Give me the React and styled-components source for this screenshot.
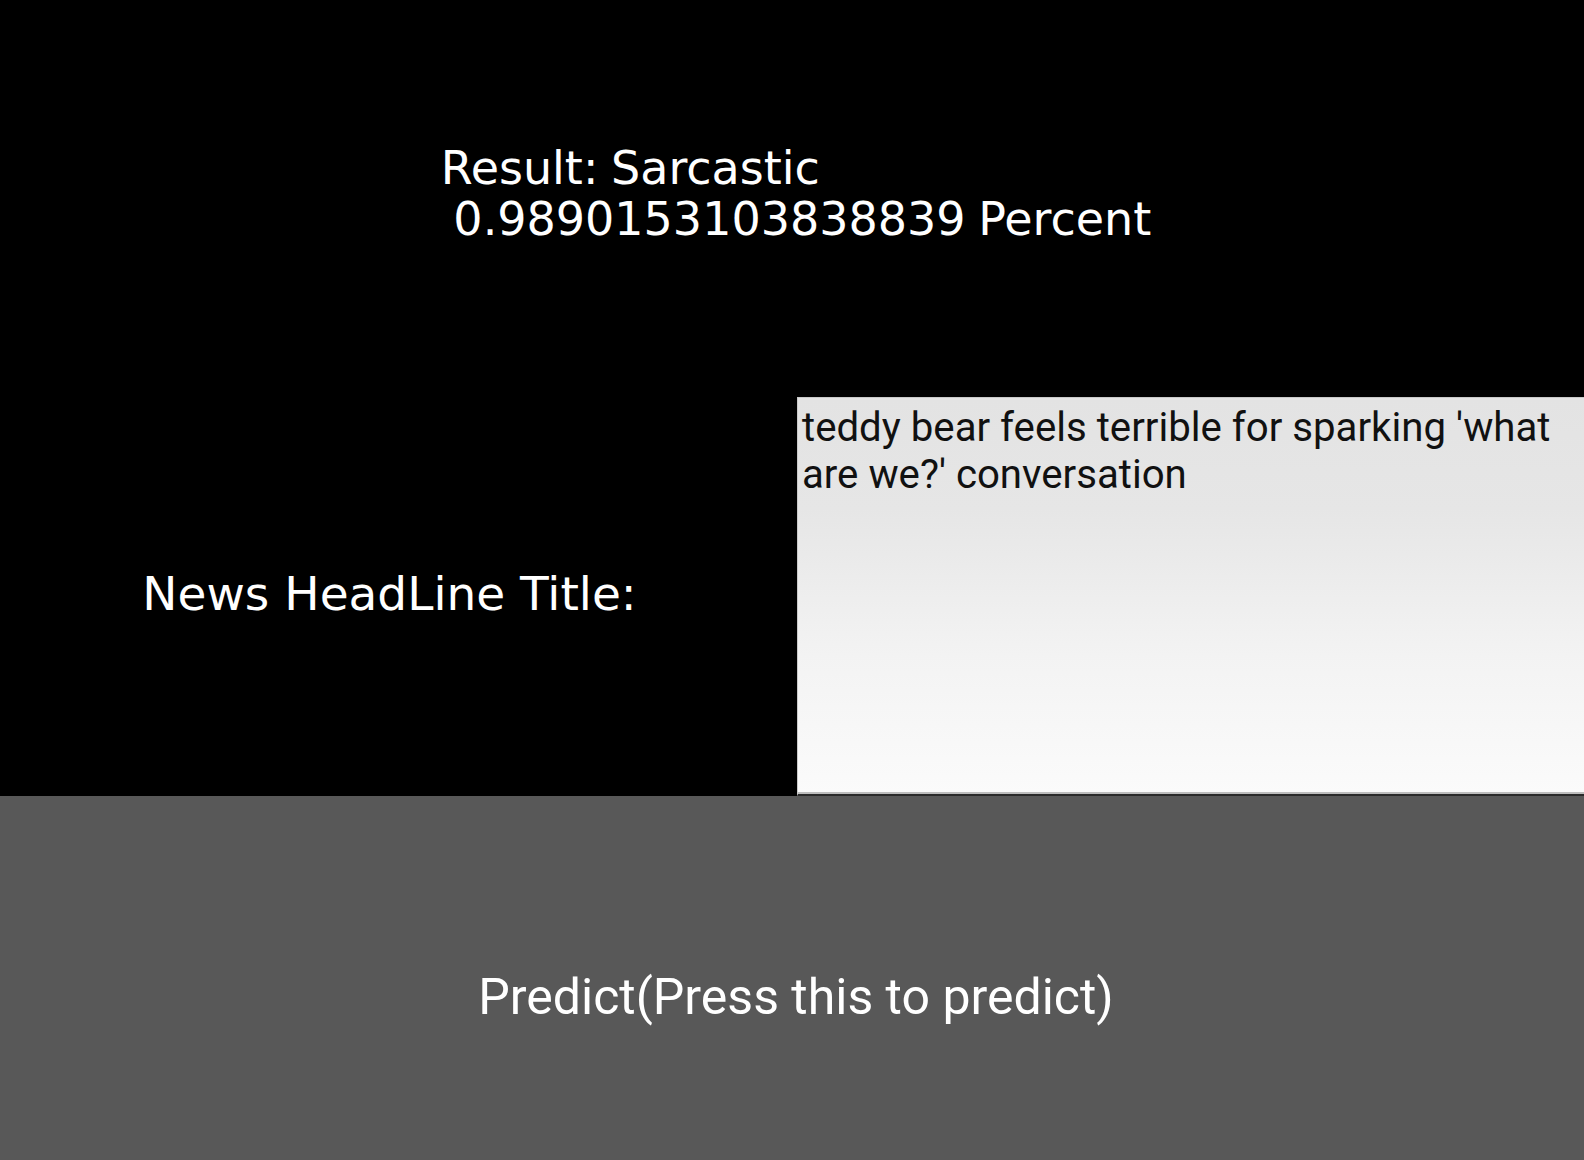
import React from "react";
import styled, { createGlobalStyle } from "styled-components";

const Global = createGlobalStyle`
  html, body {
    margin: 0;
    padding: 0;
    width: 1584px;
    height: 1160px;
    overflow: hidden;
    background: #000;
  }
`;

const Screen = styled.div`
  width: 1584px;
  height: 1160px;
  overflow: hidden;
  display: grid;
  grid-template-rows: 397px 399px 402px;
  background: #000;
`;

const ResultCell = styled.div`
  display: flex;
  align-items: center;
  justify-content: center;
  padding-bottom: 10px;
  padding-left: 8px;
`;

const ResultText = styled.div`
  font-family: "Century Gothic", "DejaVu Sans", sans-serif;
  font-size: 46px;
  line-height: 51px;
  color: #fff;
  white-space: pre;
  text-align: left;
  word-spacing: -2px;
`;

const InputRow = styled.div`
  display: grid;
  grid-template-columns: 797px 1fr;
`;

const FieldLabel = styled.div`
  display: flex;
  align-items: center;
  justify-content: center;
  font-family: "Century Gothic", "DejaVu Sans", sans-serif;
  font-size: 47px;
  color: #fff;
  padding-bottom: 6px;
  padding-right: 18px;
`;

const HeadlineInput = styled.div`
  box-sizing: border-box;
  border-top: 1px solid #c9c9c9;
  border-left: 1px solid #c9c9c9;
  border-bottom: 2px solid #2a2a2a;
  box-shadow: inset 0 -2px 0 #bdbdbd;
  background: linear-gradient(
    to bottom,
    #e3e3e3 0%,
    #e6e6e6 28%,
    #f3f3f3 65%,
    #fbfbfb 100%
  );
  padding: 7px 6px 6px 4px;
  font-family: Roboto, "Liberation Sans", sans-serif;
  font-size: 40.2px;
  line-height: 46.5px;
  color: #111;
  height: 399px;
`;

const PredictButton = styled.button`
  border: none;
  margin: 0;
  padding: 0 0 0 8px;
  background: #585858;
  color: #fff;
  font-family: Roboto, "Liberation Sans", sans-serif;
  font-size: 50px;
  width: 100%;
  height: 402px;
  display: flex;
  align-items: center;
  justify-content: center;
  cursor: pointer;
`;

export default function App() {
  return (
    <>
      <Global />
      <Screen>
        <ResultCell>
          <ResultText>{"Result: Sarcastic\n 0.9890153103838839 Percent"}</ResultText>
        </ResultCell>
        <InputRow>
          <FieldLabel>News HeadLine Title:</FieldLabel>
          <HeadlineInput>
            teddy bear feels terrible for sparking 'what are we?' conversation
          </HeadlineInput>
        </InputRow>
        <PredictButton>Predict(Press this to predict)</PredictButton>
      </Screen>
    </>
  );
}
